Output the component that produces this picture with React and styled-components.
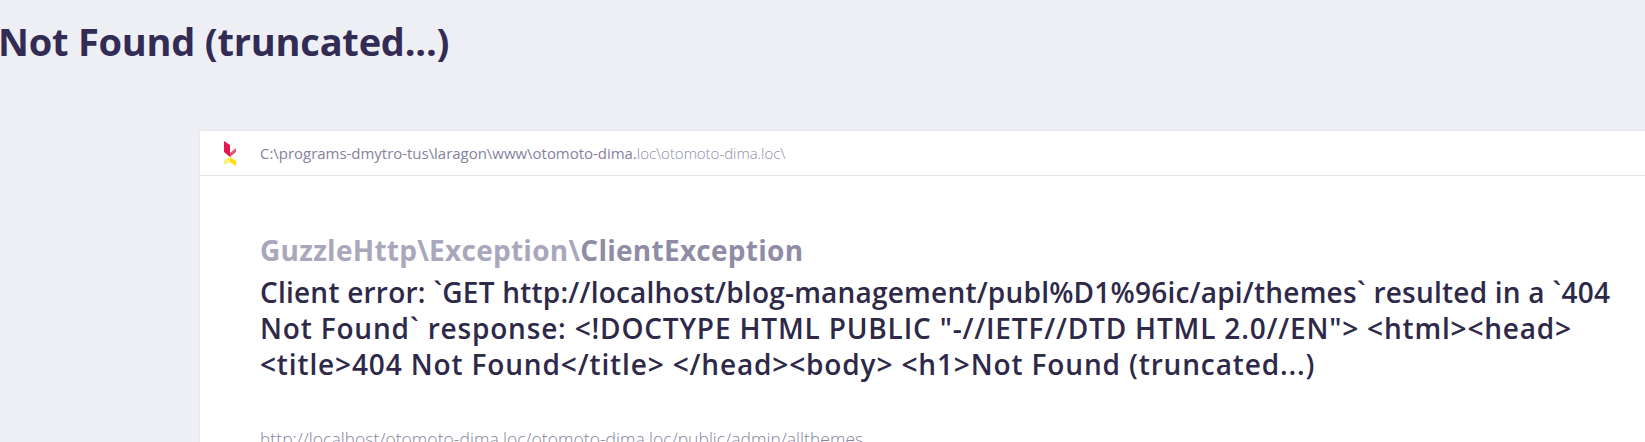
import React from "react";
import styled, { createGlobalStyle } from "styled-components";

const GlobalStyle = createGlobalStyle`
  html, body {
    margin: 0;
    padding: 0;
    height: 442px;
    overflow: hidden;
    background: #eeeff5;
    font-family: "Open Sans", "Noto Sans", sans-serif;
  }
`;

const Page = styled.div`
  height: 442px;
  overflow: hidden;
`;

const PageTitle = styled.h1`
  margin: 0 0 0 -2px;
  padding-top: 16px;
  height: 130px;
  box-sizing: border-box;
  font-size: 38px;
  line-height: 50px;
  font-weight: 700;
  letter-spacing: -0.22px;
  color: #322b54;
  white-space: nowrap;
`;

const Card = styled.section`
  margin-left: 199px;
  height: 312px;
  background: #fff;
  border-top: 1px solid #e6e7ef;
  border-left: 1px solid #e6e7ef;
`;

const CardHeader = styled.header`
  display: flex;
  align-items: center;
  height: 44px;
  border-bottom: 1px solid #e4e5ec;
`;

const LogoSlot = styled.div`
  width: 60px;
  display: flex;
  justify-content: center;
`;

const PathText = styled.div`
  font-size: 15px;
  letter-spacing: -0.03px;
  color: #85829e;
`;

const Faint = styled.span`
  color: #8f8ca6;
  font-weight: 300;
`;

const CardBody = styled.div`
  padding: 55px 0 0 60px;
`;

const ExceptionClass = styled.div`
  margin-bottom: 5px;
  font-size: 28px;
  line-height: 38px;
  font-weight: 700;
  letter-spacing: 0.27px;
  color: #8f8ca6;
  white-space: nowrap;
`;

const Namespace = styled.span`
  color: #a9a7bb;
`;

const MessageLine = styled.div`
  font-size: 28px;
  line-height: 36px;
  font-weight: 600;
  letter-spacing: ${(p) => p.$tracking}px;
  color: #2e2949;
  white-space: nowrap;
`;

const RequestUrl = styled.div`
  margin-top: 45px;
  font-size: 17.5px;
  line-height: 24px;
  font-weight: 300;
  letter-spacing: 0.03px;
  color: #85829e;
  white-space: nowrap;
`;

const Logo = () => (
  <svg width="12" height="25" viewBox="0 0 12 25">
    <polygon points="0,0 6,4 6,16 0,11" fill="#e6174e" />
    <polygon points="6,16 6,12 12,7 12,11" fill="#f0527a" />
    <polygon points="0,24 0,19 6,16 6,21" fill="#ffee80" />
    <polygon points="6,16 12,20 12,25 6,21" fill="#ffdd00" />
  </svg>
);

export default function App() {
  return (
    <Page>
      <GlobalStyle />
      <PageTitle>Not Found (truncated...)</PageTitle>
      <Card>
        <CardHeader>
          <LogoSlot>
            <Logo />
          </LogoSlot>
          <PathText>
            C:\programs-dmytro-tus\laragon\www\otomoto-dima.
            <Faint>loc\otomoto-dima.loc\</Faint>
          </PathText>
        </CardHeader>
        <CardBody>
          <ExceptionClass>
            <Namespace>GuzzleHttp\Exception\</Namespace>ClientException
          </ExceptionClass>
          <MessageLine $tracking={0.22}>
            Client error: `GET http://localhost/blog-management/publ%D1%96ic/api/themes` resulted in a `404
          </MessageLine>
          <MessageLine $tracking={0.82}>
            Not Found` response: &lt;!DOCTYPE HTML PUBLIC "-//IETF//DTD HTML 2.0//EN"&gt; &lt;html&gt;&lt;head&gt;
          </MessageLine>
          <MessageLine $tracking={0.86}>
            &lt;title&gt;404 Not Found&lt;/title&gt; &lt;/head&gt;&lt;body&gt; &lt;h1&gt;Not Found (truncated...)
          </MessageLine>
          <RequestUrl>http://localhost/otomoto-dima.loc/otomoto-dima.loc/public/admin/allthemes</RequestUrl>
        </CardBody>
      </Card>
    </Page>
  );
}
